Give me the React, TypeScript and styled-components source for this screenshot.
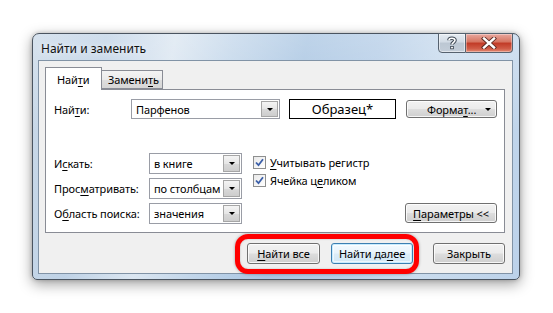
import React from "react";
import styled, { createGlobalStyle, css } from "styled-components";

const Global = createGlobalStyle`
  html, body { margin: 0; padding: 0; background: #ffffff; }
  body {
    width: 553px; height: 313px; overflow: hidden;
    font-family: "Noto Sans", "Segoe UI", sans-serif;
    font-size: 11px; letter-spacing: -0.1px; color: #000;
  }
  * { box-sizing: border-box; }
`;

const Stage = styled.div`
  padding: 33px 0 0 32px;
`;

const Window = styled.div`
  width: 488px;
  height: 247px;
  border: 1px solid #4a5460;
  border-radius: 7px 7px 5px 5px;
  background:
    linear-gradient(180deg, rgba(255,255,255,0.25) 0%, rgba(255,255,255,0) 40%),
    linear-gradient(100deg, #cad9e8 0%, #bfd2e6 14%, #dbe6f1 27%, #c2d6ea 38%, #a9c5e2 52%, #b5cde7 66%, #cadcee 80%, #bcd2ea 100%);
  box-shadow: 0 4px 14px rgba(0,0,0,0.38), 0 0 4px rgba(0,0,0,0.2);
  display: flex;
  flex-direction: column;
  padding: 0 6px 5px 5px;
`;

const TitleBar = styled.div`
  height: 28px;
  display: flex;
  align-items: flex-start;
  justify-content: space-between;
`;

const Title = styled.div`
  padding: 6px 0 0 3px;
  font-size: 12px;
  letter-spacing: 0;
  color: #111;
  text-shadow: 0 0 6px rgba(255,255,255,0.9);
`;

const Caption = styled.div`
  display: flex;
  margin-top: -1px;
`;

const CapBtn = styled.div<{ $close?: boolean }>`
  height: 20px;
  width: ${p => (p.$close ? "47px" : "28px")};
  display: flex;
  align-items: center;
  justify-content: center;
  border: 1px solid #56626f;
  ${p =>
    p.$close
      ? css`
          border-left: none;
          border-radius: 0 0 4px 0;
          background: linear-gradient(180deg, #e9a89f 0%, #d5735f 45%, #c13a26 50%, #cf5a45 80%, #e48a73 100%);
          box-shadow: inset 0 0 0 1px rgba(255,255,255,0.35);
        `
      : css`
          border-radius: 0 0 0 4px;
          background: linear-gradient(180deg, #e6ecf2 0%, #d2dbe5 45%, #bcc7d3 50%, #c3cdd8 100%);
          box-shadow: inset 0 0 0 1px rgba(255,255,255,0.5);
        `}
`;

const Client = styled.div`
  flex: 1;
  border: 1px solid #8193a6;
  background: #f0f0f0;
  display: flex;
  flex-direction: column;
  padding: 6px 7px 9px 6px;
`;

const TabStrip = styled.div`
  display: flex;
  align-items: flex-end;
  height: 23px;
  position: relative;
  z-index: 1;
  margin-bottom: -1px;
`;

const Tab = styled.div<{ $active?: boolean }>`
  border: 1px solid #898c95;
  display: flex;
  align-items: center;
  white-space: nowrap;
  ${p =>
    p.$active
      ? css`
          height: 23px;
          width: 57px;
          padding-left: 11px;
          background: #ffffff;
          border-bottom: none;
        `
      : css`
          height: 19px;
          width: 61px;
          padding-left: 6px;
          margin-bottom: 1px;
          border-left: none;
          background: linear-gradient(180deg, #f3f3f3 0%, #ebebeb 50%, #dedede 51%, #d6d6d6 100%);
        `}
`;

const Panel = styled.div`
  height: 144px;
  border: 1px solid #898c95;
  background: #ffffff;
  padding: 9px 7px 8px 8px;
  display: flex;
  flex-direction: column;
`;

const TopRow = styled.div`
  display: flex;
  align-items: center;
  height: 20px;
`;

const Label = styled.div<{ $w: number }>`
  width: ${p => p.$w}px;
  flex: none;
  white-space: nowrap;
`;

const U = styled.span`
  text-decoration: underline;
  text-underline-offset: 2px;
`;

const Combo = styled.div<{ $w: number; $h?: number }>`
  width: ${p => p.$w}px;
  height: ${p => p.$h ?? 20}px;
  border: 1px solid #9a9da6;
  background: #fff;
  display: flex;
  align-items: center;
  padding: 1px 1px 1px 4px;
  flex: none;
`;

const ComboText = styled.div`
  flex: 1;
  white-space: nowrap;
  overflow: hidden;
`;

const DropBtn = styled.div`
  width: 17px;
  height: 100%;
  flex: none;
  border: 1px solid #a6a6a6;
  background: linear-gradient(180deg, #f4f4f4 0%, #e6e6e6 50%, #d9d9d9 51%, #cdcdcd 100%);
  display: flex;
  align-items: center;
  justify-content: center;
`;

const Arrow = styled.div<{ $size?: number }>`
  width: 0;
  height: 0;
  border-left: ${p => p.$size ?? 4}px solid transparent;
  border-right: ${p => p.$size ?? 4}px solid transparent;
  border-top: ${p => p.$size ?? 4}px solid #000;
`;

const Sample = styled.div`
  width: 107px;
  height: 20px;
  margin-left: 9px;
  border: 1px solid #000;
  background: #fff;
  display: flex;
  align-items: center;
  justify-content: center;
  font-size: 13px;
  letter-spacing: 0;
`;

const Button = styled.div<{ $w: number; $h?: number; $default?: boolean }>`
  width: ${p => p.$w}px;
  height: ${p => p.$h ?? 21}px;
  flex: none;
  border: 1px solid #707070;
  border-radius: 3px;
  display: flex;
  align-items: center;
  justify-content: center;
  white-space: nowrap;
  background: linear-gradient(180deg, #f2f2f2 0%, #ebebeb 48%, #dddddd 52%, #cfcfcf 100%);
  box-shadow: inset 0 0 0 1px rgba(255,255,255,0.8);
  ${p =>
    p.$default &&
    css`
      border-color: #3c7fb1;
      box-shadow: inset 0 0 0 1px #c8ecff, inset 0 0 0 2px rgba(255,255,255,0.6);
      background: linear-gradient(180deg, #f4faff 0%, #e8f4fb 48%, #dcedf8 52%, #d2e8f6 100%);
    `}
`;

const FormatButton = styled(Button)`
  margin-left: 10px;
  justify-content: space-between;
  padding: 0 5px 0 20px;
`;

const Lower = styled.div`
  margin-top: auto;
  display: flex;
  align-items: flex-end;
`;

const FieldGrid = styled.div`
  display: grid;
  grid-template-columns: 95px 93px;
  grid-auto-rows: 21px;
  row-gap: 4px;
  align-items: center;
`;

const Checks = styled.div`
  align-self: flex-start;
  margin-left: 11px;
  display: flex;
  flex-direction: column;
`;

const CheckRow = styled.div`
  height: 18px;
  display: flex;
  align-items: center;
  gap: 4px;
`;

const Box = styled.div`
  width: 13px;
  height: 13px;
  border: 1px solid #8e8f8f;
  background: linear-gradient(135deg, #e9e9e9 0%, #f4f4f4 50%, #ffffff 100%);
  display: flex;
  align-items: center;
  justify-content: center;
`;

const ParamButton = styled(Button)`
  margin-left: auto;
  margin-bottom: 1px;
`;

const Footer = styled.div`
  margin-top: 10px;
  display: flex;
  justify-content: flex-end;
  align-items: center;
`;

const Highlight = styled.div`
  position: relative;
  display: flex;
  gap: 11px;
  margin-right: 20px;
`;

const RedRing = styled.div`
  position: absolute;
  left: -12px;
  right: -6px;
  top: -9px;
  bottom: -10px;
  border: 5px solid #ff0000;
  border-radius: 13px;
  box-shadow: 0 0 3px rgba(0,0,0,0.35), inset 0 0 2px rgba(0,0,0,0.25);
  pointer-events: none;
`;

const Check = () => (
  <svg width="9" height="9" viewBox="0 0 9 9">
    <path d="M1 4.5 L3.5 7.2 L8 1.2" fill="none" stroke="#3a5ea8" strokeWidth="1.8" />
  </svg>
);

const CloseGlyph = () => (
  <svg width="16" height="12" viewBox="0 0 16 12">
    <path d="M3 1.5 L13 10.5 M13 1.5 L3 10.5" stroke="#5a2a22" strokeWidth="4.2" strokeLinecap="square" />
    <path d="M3 1.5 L13 10.5 M13 1.5 L3 10.5" stroke="#ffffff" strokeWidth="2.4" strokeLinecap="square" />
  </svg>
);

const HelpGlyph = () => (
  <svg width="10" height="14" viewBox="0 0 10 14">
    <path d="M2 4.2 C2 1.6 8 1.4 8 4.3 C8 6.2 5 6.4 5 8.6" fill="none" stroke="#3d4753" strokeWidth="3.6" />
    <rect x="3.2" y="10" width="3.6" height="3.2" fill="#3d4753" />
    <path d="M2 4.2 C2 1.6 8 1.4 8 4.3 C8 6.2 5 6.4 5 8.6" fill="none" stroke="#ffffff" strokeWidth="1.6" />
    <rect x="4.1" y="10.8" width="1.8" height="1.6" fill="#ffffff" />
  </svg>
);

export default function App() {
  return (
    <>
      <Global />
      <Stage>
        <Window>
          <TitleBar>
            <Title>Найти и заменить</Title>
            <Caption>
              <CapBtn><HelpGlyph /></CapBtn>
              <CapBtn $close><CloseGlyph /></CapBtn>
            </Caption>
          </TitleBar>
          <Client>
            <TabStrip>
              <Tab $active>Най<U>т</U>и</Tab>
              <Tab>Замени<U>т</U>ь</Tab>
            </TabStrip>
            <Panel>
              <TopRow>
                <Label $w={77}>Най<U>т</U>и:</Label>
                <Combo $w={149}>
                  <ComboText>Парфенов</ComboText>
                  <DropBtn><Arrow $size={3.5} /></DropBtn>
                </Combo>
                <Sample>Образец*</Sample>
                <FormatButton $w={91} $h={18}>
                  <span>Форма<U>т</U>...</span>
                  <Arrow $size={3} />
                </FormatButton>
              </TopRow>
              <Lower>
                <FieldGrid>
                  <Label $w={95}>И<U>с</U>кать:</Label>
                  <Combo $w={93} $h={21}>
                    <ComboText>в книге</ComboText>
                    <DropBtn><Arrow $size={3.5} /></DropBtn>
                  </Combo>
                  <Label $w={95}>Прос<U>м</U>атривать:</Label>
                  <Combo $w={93} $h={21}>
                    <ComboText>по столбцам</ComboText>
                    <DropBtn><Arrow $size={3.5} /></DropBtn>
                  </Combo>
                  <Label $w={95}>О<U>б</U>ласть поиска:</Label>
                  <Combo $w={93} $h={21}>
                    <ComboText>значения</ComboText>
                    <DropBtn><Arrow $size={3.5} /></DropBtn>
                  </Combo>
                </FieldGrid>
                <Checks>
                  <CheckRow>
                    <Box><Check /></Box>
                    <span><U>У</U>читывать регистр</span>
                  </CheckRow>
                  <CheckRow>
                    <Box><Check /></Box>
                    <span>Ячейка ц<U>е</U>ликом</span>
                  </CheckRow>
                </Checks>
                <ParamButton $w={92} $h={20}>
                  <span><U>П</U>араметры &lt;&lt;</span>
                </ParamButton>
              </Lower>
            </Panel>
            <Footer>
              <Highlight>
                <Button $w={73}><span><U>Н</U>айти все</span></Button>
                <Button $w={82} $default><span>Найти да<U>л</U>ее</span></Button>
                <RedRing />
              </Highlight>
              <Button $w={72}>Закрыть</Button>
            </Footer>
          </Client>
        </Window>
      </Stage>
    </>
  );
}
